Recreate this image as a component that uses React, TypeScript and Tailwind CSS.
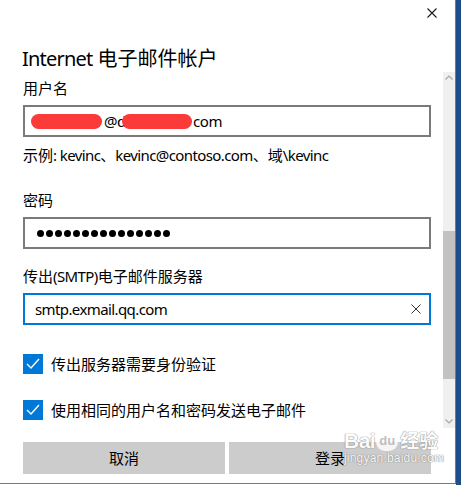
import React from "react";

const FONT = '"Noto Sans", "Noto Sans CJK SC", sans-serif';

function L({ children }: { children: React.ReactNode }) {
  return <span className="tracking-[-0.6px]">{children}</span>;
}

function Check() {
  return (
    <div className="w-[20px] h-[20px] bg-[#0078d7] shrink-0 flex items-center justify-center">
      <svg width="20" height="20" viewBox="0 0 20 20">
        <polyline points="4,10 8,14 16,5" fill="none" stroke="#ffffff" strokeWidth="1.4" />
      </svg>
    </div>
  );
}

function Chevron({ up }: { up?: boolean }) {
  return (
    <svg width="8" height="5" viewBox="0 0 8 5">
      <polyline
        points={up ? "0.5,4.5 4,1 7.5,4.5" : "0.5,0.5 4,4 7.5,0.5"}
        fill="none"
        stroke="#a6a6a6"
        strokeWidth="1.2"
      />
    </svg>
  );
}

export default function App() {
  const dots = Array.from({ length: 15 });
  return (
    <div className="w-[461px] h-[485px] flex bg-white overflow-hidden text-[#000]" style={{ fontFamily: FONT }}>
      <div className="relative w-[456px] h-[484px] border-r border-b border-[#3c86d8] bg-white flex flex-col shrink-0">
        {/* header */}
        <div className="h-[46px] flex justify-end items-start">
          <svg className="mt-[8px] mr-[18px]" width="10" height="10" viewBox="0 0 10 10">
            <path d="M0.5 0.5 L9.5 9.5 M9.5 0.5 L0.5 9.5" stroke="#1a1a1a" strokeWidth="1.1" />
          </svg>
        </div>
        {/* title */}
        <div className="pl-[22px] text-[20px] leading-[26px] h-[26px] whitespace-nowrap">
          <span className="tracking-[-0.8px]">Internet</span> 电子邮件帐户
        </div>
        {/* body */}
        <div className="flex h-[356px]">
          <div className="flex-1 pl-[23px] pr-[12px] pt-[5px] flex flex-col">
            <div className="text-[15px] leading-[22px]">用户名</div>
            <div className="mt-[6px] h-[32px] border-2 border-[#7a7a7a] flex items-center pl-[6px] text-[15px] whitespace-nowrap">
              <span className="inline-block w-[71px] h-[15px] bg-[#fb3a3a] rounded-full" />
              <span className="ml-[2px] tracking-[-0.4px]">@d</span>
              <span className="inline-block w-[70px] h-[15px] bg-[#fb3a3a] rounded-full -ml-[4px]" />
              <span className="ml-[1px] tracking-[-0.4px]">com</span>
            </div>
            <div className="mt-[8px] text-[15px] leading-[20px] whitespace-nowrap">
              示例<L>: kevinc</L>、<L>kevinc@contoso.com</L>、域<L>\kevinc</L>
            </div>
            <div className="mt-[25px] text-[15px] leading-[20px]">密码</div>
            <div className="mt-[7px] h-[32px] border-2 border-[#7a7a7a] flex items-center pl-[12px] gap-[2px]">
              {dots.map((_, i) => (
                <span key={i} className="w-[7px] h-[7px] rounded-full bg-[#000]" />
              ))}
            </div>
            <div className="mt-[17px] text-[15px] leading-[20px] whitespace-nowrap">
              传出<L>(SMTP)</L>电子邮件服务器
            </div>
            <div className="mt-[7px] h-[32px] border-2 border-[#0078d7] flex items-center pl-[10px] pr-[8px] text-[15px]">
              <span className="flex-1 tracking-[-0.6px]">smtp.exmail.qq.com</span>
              <svg width="10" height="10" viewBox="0 0 10 10">
                <path d="M0.5 0.5 L9.5 9.5 M9.5 0.5 L0.5 9.5" stroke="#333" strokeWidth="1" />
              </svg>
            </div>
            <div className="mt-[29px] flex items-center gap-[8px] h-[20px]">
              <Check />
              <span className="text-[15px] leading-[20px] whitespace-nowrap">传出服务器需要身份验证</span>
            </div>
            <div className="mt-[26px] flex items-center gap-[8px] h-[20px]">
              <Check />
              <span className="text-[15px] leading-[20px] whitespace-nowrap">使用相同的用户名和密码发送电子邮件</span>
            </div>
          </div>
          {/* scrollbar */}
          <div className="w-[12px] bg-[#f0f0f0] flex flex-col">
            <div className="h-[159px] flex justify-center pt-[3px]">
              <Chevron up />
            </div>
            <div className="h-[148px] bg-[#c2c2c2]" />
            <div className="flex-1 flex justify-center items-end pb-[4px]">
              <Chevron />
            </div>
          </div>
        </div>
        {/* footer */}
        <div className="mt-[14px] pl-[23px] flex gap-[4px]">
          <div className="w-[202px] h-[32px] bg-[#cccccc] flex items-center justify-center text-[15px]">取消</div>
          <div className="w-[202px] h-[32px] bg-[#cccccc] flex items-center justify-center text-[15px]">登录</div>
        </div>
        {/* watermark */}
        <div className="absolute left-[344px] top-[429px] flex flex-col items-start text-white opacity-90 [text-shadow:0_0_1px_#777,0_0_1px_#777]">
          <div className="flex items-end leading-[20px]">
            <span className="text-[21px] font-bold tracking-[-0.5px]" style={{ fontFamily: '"Liberation Sans", sans-serif' }}>Bai</span>
            <span className="relative ml-[1px] w-[22px] h-[22px] rounded-[9px] bg-white/90 flex items-end justify-center text-[13px] font-bold text-[#bbb] [text-shadow:none]" style={{ fontFamily: '"Liberation Sans", sans-serif' }}>du</span>
            <span className="ml-[2px] text-[19px] font-bold">经验</span>
          </div>
          <div className="text-[12px] leading-[13px] mt-[1px] tracking-[0.2px]" style={{ fontFamily: '"Liberation Sans", sans-serif' }}>jingyan.baidu.com</div>
        </div>
      </div>
      <div className="flex-1 bg-[#1d4e8a]" />
    </div>
  );
}
